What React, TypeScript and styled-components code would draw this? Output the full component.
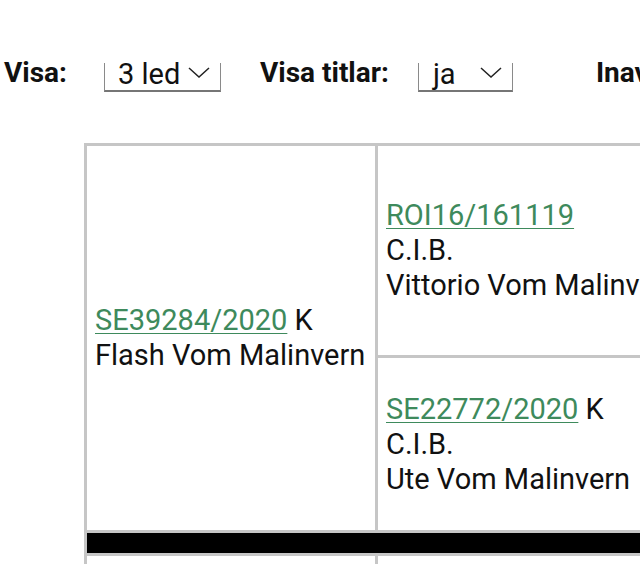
import React from "react";
import styled, { createGlobalStyle } from "styled-components";

const GlobalStyle = createGlobalStyle`
  html, body {
    margin: 0;
    padding: 0;
    background: #ffffff;
    overflow: hidden;
  }
  body {
    font-family: Roboto, "Liberation Sans", Arial, sans-serif;
    color: #111111;
  }
`;

const Chevron = () => (
  <svg width="22" height="11" viewBox="0 0 22 11" fill="none">
    <polyline points="1,1 11,10 21,1" stroke="#222" strokeWidth="1.5" />
  </svg>
);

const App = () => {
  return (
    <>
      <GlobalStyle />
      <Page>
        <Toolbar>
          <Label $gap={37}>Visa:</Label>
          <Select $width={117} $pad={13} $gap={39}>
            <span>3 led</span>
            <Chevron />
          </Select>
          <Label $gap={29}>Visa titlar:</Label>
          <Select $width={95} $pad={14} $gap={83}>
            <span>ja</span>
            <Chevron />
          </Select>
          <Label $gap={0}>Inavelsgrad:</Label>
        </Toolbar>
        <Pedigree>
          <tbody>
            <tr>
              <LeftCell rowSpan={2}>
                <Reg href="#">SE39284/2020</Reg> K
                <br />
                Flash Vom Malinvern
              </LeftCell>
              <RightCell $height={209}>
                <Reg href="#">ROI16/161119</Reg>
                <br />
                C.I.B.
                <br />
                Vittorio Vom Malinvern
              </RightCell>
            </tr>
            <tr>
              <RightCell $height={172}>
                <Reg href="#">SE22772/2020</Reg> K
                <br />
                C.I.B.
                <br />
                Ute Vom Malinvern
              </RightCell>
            </tr>
            <tr>
              <Divider colSpan={2} />
            </tr>
            <tr>
              <LeftCell $height={60} />
              <RightCell $height={60} />
            </tr>
          </tbody>
        </Pedigree>
      </Page>
    </>
  );
};

export default App;

const Page = styled.div`
  width: 1100px;
  padding-top: 58px;
`;

const Toolbar = styled.div`
  display: flex;
  align-items: flex-end;
  height: 34px;
  padding-left: 4px;
`;

const Label = styled.div<{ $gap: number }>`
  font-size: 28px;
  font-weight: 700;
  line-height: 30px;
  margin-right: ${(p) => p.$gap}px;
  margin-bottom: 4px;
  white-space: nowrap;
`;

const Select = styled.div<{ $width: number; $pad: number; $gap: number }>`
  display: flex;
  align-items: flex-start;
  justify-content: space-between;
  box-sizing: border-box;
  width: ${(p) => p.$width}px;
  height: 29px;
  margin-right: ${(p) => p.$gap}px;
  padding: 0 10px 0 ${(p) => p.$pad}px;
  font-size: 29px;
  line-height: 22px;
  border-left: 1px solid #8a8a8a;
  border-right: 1px solid #8a8a8a;
  border-bottom: 2px solid #767676;

  svg {
    margin-top: 4px;
  }
`;

const Pedigree = styled.table`
  margin: 51px 0 0 84px;
  border-collapse: collapse;
  font-size: 29px;
  line-height: 35px;
`;

const Cell = styled.td<{ $height?: number }>`
  border: 3px solid #c6c6c6;
  padding: 0 9px 0 8px;
  vertical-align: middle;
  white-space: nowrap;
  ${(p) => (p.$height ? `height: ${p.$height}px;` : "")}
`;

const LeftCell = styled(Cell)`
  width: 271px;
`;

const RightCell = styled(Cell)`
  width: 400px;
`;

const Divider = styled.td`
  border: 3px solid #c6c6c6;
  background: #000000;
  height: 20px;
  padding: 0;
`;

const Reg = styled.a`
  color: #3e8a5c;
  text-decoration: underline;
  text-underline-offset: 3px;
  text-decoration-thickness: 1px;
`;
